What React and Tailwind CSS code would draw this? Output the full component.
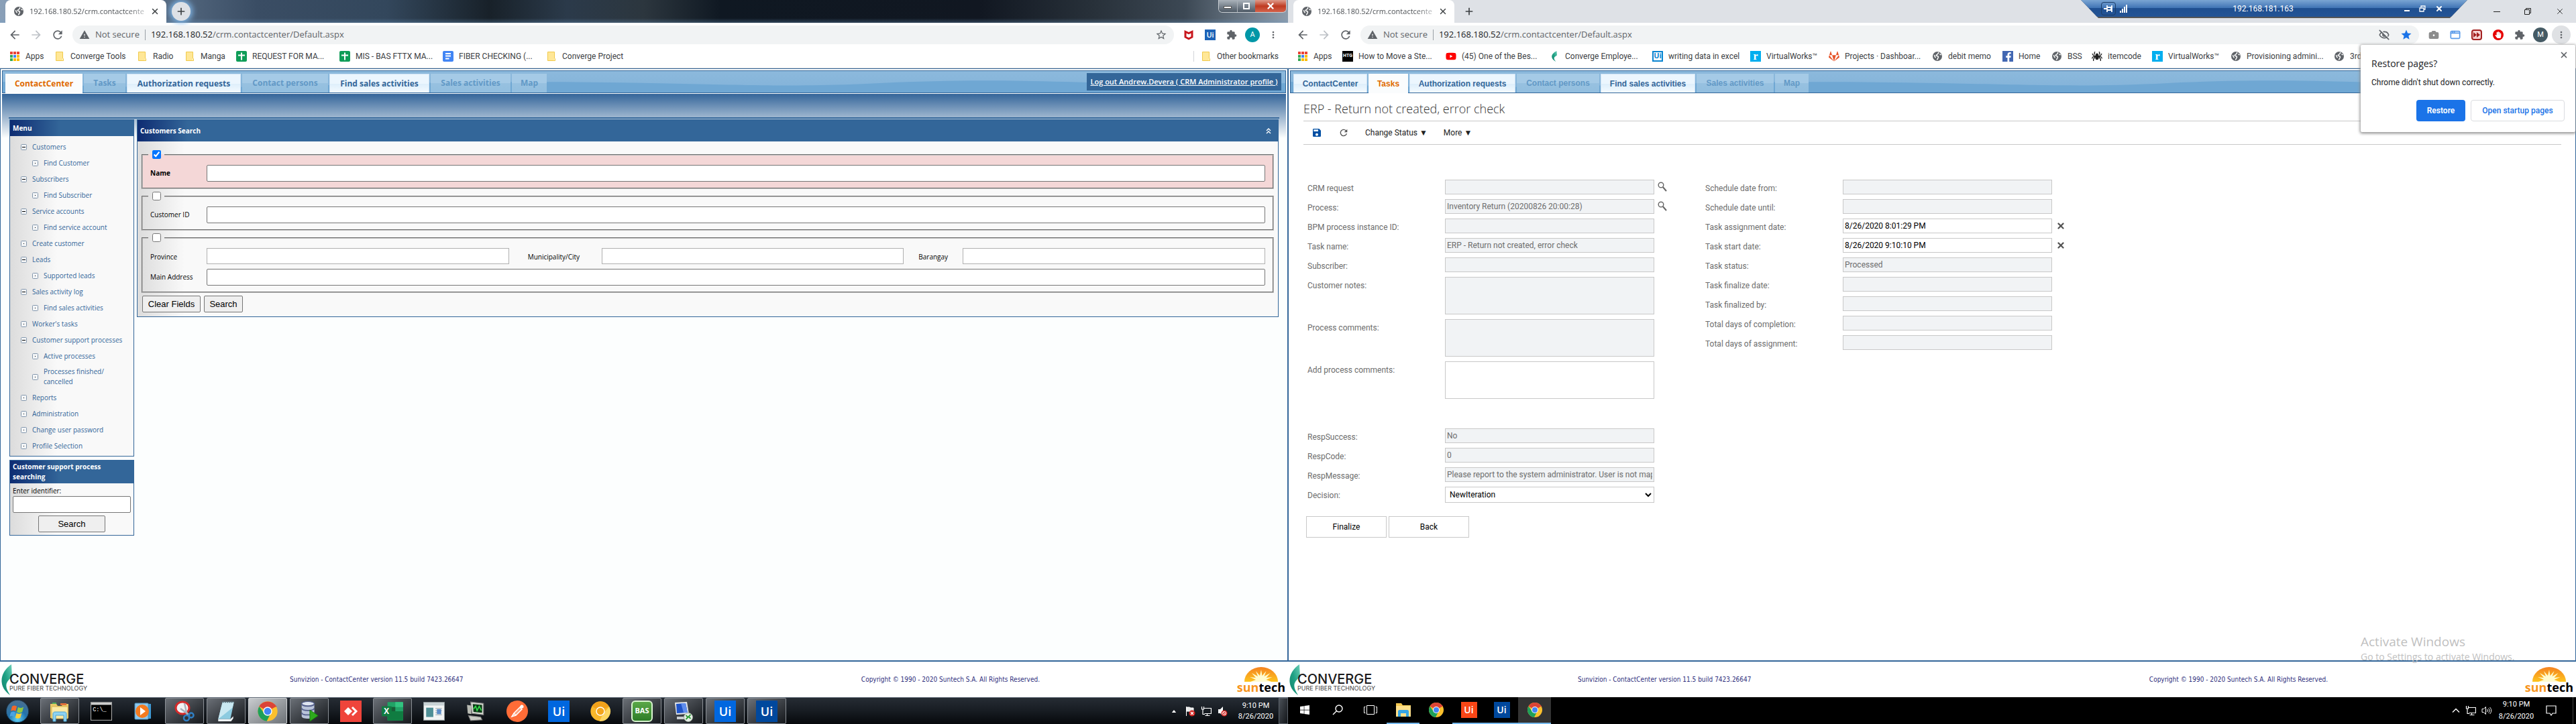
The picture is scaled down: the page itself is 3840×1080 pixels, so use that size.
import React from "react";
import { EyeOff, X, Plus, Camera, AppWindow } from "lucide-react";
import { MdArrowBack, MdArrowForward, MdRefresh, MdWarning, MdExtension, MdMoreVert, MdStar, MdStarBorder, MdSave } from "react-icons/md";
import { FaYoutube, FaGitlab, FaFacebookF, FaHandPaper, FaWindows, FaSpider } from "react-icons/fa";

/* ---------- small drawings ---------- */

function Globe() {
  return (
    <svg viewBox="0 0 16 16" className="size-4 shrink-0" aria-hidden="true">
      <circle cx="8" cy="8" r="7" fill="#5f6368" />
      <path d="M9 2.2c1.6.8-.4 1.9-.9 2.7-.6.9-2.1.6-1.9 1.9.2 1 2.2.5 3 1.4.9 1-.1 2-.6 2.9-.4.7-.5 2-1.4 2.3M3 6.5c1 .2 1.3 1.3 1.4 2.2.1.7 1 .9 1 1.6M11.5 4.5c.6.6 1.6.8 2 1.6" stroke="#fff" strokeWidth="1.5" fill="none" />
    </svg>
  );
}

function AppsGrid() {
  const colors = ["#ea4335", "#ea4335", "#ea4335", "#34a853", "#4285f4", "#fbbc04", "#34a853", "#fbbc04", "#fbbc04"];
  return (
    <svg viewBox="0 0 16 16" className="size-4" aria-hidden="true">
      {colors.map((c, i) => (
        <rect key={i} x={1 + (i % 3) * 5} y={1 + Math.floor(i / 3) * 5} width="4" height="4" fill={c} />
      ))}
    </svg>
  );
}

function Folder() {
  return (
    <svg viewBox="0 0 16 16" className="size-4" aria-hidden="true">
      <path d="M2.5 1.5h10v11.5l.5 1.5h-10.5z" fill="#ffe797" stroke="#f0c94a" />
      <path d="M12.5 10.5l1 1v3h-2" fill="#fff3c4" stroke="#f0c94a" />
    </svg>
  );
}

function Sheet() {
  return (
    <svg viewBox="0 0 16 16" className="size-4" aria-hidden="true">
      <rect width="16" height="16" rx="2" fill="#0f9d58" />
      <path d="M8 2.5v11M3 6.5h10" stroke="#fff" strokeWidth="2" />
    </svg>
  );
}

function Doc() {
  return (
    <svg viewBox="0 0 16 16" className="size-4" aria-hidden="true">
      <rect width="16" height="16" rx="2" fill="#4285f4" />
      <path d="M4 4h8M4 7.5h8M4 11.5h5.5" stroke="#fff" strokeWidth="1.8" />
    </svg>
  );
}

function Htg() {
  return <span className="flex size-4 items-center justify-center bg-black text-[7px] font-bold text-white">HTG</span>;
}

function ConvergeMark({ className = "size-4" }) {
  return (
    <svg viewBox="0 0 16 44" className={className} aria-hidden="true" preserveAspectRatio="none">
      <path d="M15 0C-3 12-5 32 13 44 5 32 5 26 16 18z" fill="url(#leaf)" />
      <defs>
        <linearGradient id="leaf" x1="0" y1="1" x2="1" y2="0">
          <stop offset="0" stopColor="#12806a" />
          <stop offset=".5" stopColor="#1fa184" />
          <stop offset="1" stopColor="#6fd0ba" />
        </linearGradient>
      </defs>
    </svg>
  );
}

function UiBox({ className }) {
  return <span className={"flex items-center justify-center font-['Open_Sans'] font-semibold text-white " + className}>Ui</span>;
}

function UiOutline() {
  return <span className="flex size-4 items-center justify-center border-2 border-[#0a85d1] bg-white font-['Open_Sans'] text-[11px] font-bold text-[#0a85d1]">Ui</span>;
}

function RBox() {
  return <span className="flex size-4 items-center justify-center bg-[#00aeef] font-['Liberation_Serif'] text-base leading-none font-bold text-white">r</span>;
}

function Puzzle() {
  return <MdExtension className="size-4 text-[#5f6368]" />;
}

function McAfee() {
  return (
    <svg viewBox="0 0 16 16" className="size-4" aria-hidden="true">
      <path d="M1.5 1l6.5 3 6.5-3v11L8 15.5 1.5 12z" fill="#c8171d" />
      <path d="M4.5 5.5L8 7.2l3.5-1.7v5L8 12.3l-3.5-1.8z" fill="#fff" />
    </svg>
  );
}

function ChromeLogo({ className = "size-6" }) {
  return (
    <svg viewBox="0 0 48 48" className={className} aria-hidden="true">
      <circle cx="24" cy="24" r="22" fill="#fbc02d" />
      <path d="M24 24L5 13A22 22 0 0 1 43 13z" fill="#db4437" />
      <path d="M5 13A22 22 0 0 0 22 46l9-18L15 27z" fill="#1da05a" />
      <path d="M24 14h20.5a22 22 0 0 0-1.5-2.5L24 10z" fill="#db4437" />
      <circle cx="24" cy="24" r="10" fill="#fff" />
      <circle cx="24" cy="24" r="8" fill="#4285f4" />
    </svg>
  );
}

function CanaryLogo() {
  return (
    <svg viewBox="0 0 48 48" className="size-8" aria-hidden="true">
      <circle cx="24" cy="24" r="22" fill="#f9b72a" />
      <path d="M24 24L5 13A22 22 0 0 1 43 13z" fill="#f1a11b" />
      <path d="M22 46l9-18 13-14a22 22 0 0 1-22 32z" fill="#fdd663" />
      <circle cx="24" cy="24" r="10" fill="#fff" />
      <circle cx="24" cy="24" r="8" fill="#f3a51c" />
    </svg>
  );
}

function ExplorerOld() {
  return (
    <svg viewBox="0 0 32 32" className="size-8" aria-hidden="true">
      <path d="M2 5h9l2 3h6l2-3h8v21H2z" fill="#e9c867" />
      <path d="M4 9h24v18H4z" fill="#fbe9a4" stroke="#d9b54e" />
      <path d="M5 3h6v2H5z" fill="#4fae5a" /><path d="M17 4h9v3h-9z" fill="#e2703a" />
      <path d="M6 31V20c0-2 1-3 3-3h14c2 0 3 1 3 3v11h-4v-9H10v9z" fill="#8ed3f2" stroke="#4aa3cf" />
    </svg>
  );
}

function ExplorerNew() {
  return (
    <svg viewBox="0 0 24 24" className="size-6" aria-hidden="true">
      <path d="M1 2h8l2 3h12v17H1z" fill="#f3c74f" />
      <path d="M1 6h22v16H1z" fill="#ffe08a" />
      <path d="M4 22v-8c0-1 1-2 2-2h12c1 0 2 1 2 2v8h-4v-5H8v5z" fill="#35a5e5" />
    </svg>
  );
}

function CmdIcon() {
  return (
    <svg viewBox="0 0 30 26" className="h-7 w-8" aria-hidden="true">
      <rect x=".5" y=".5" width="29" height="25" fill="#000" stroke="#aaa" />
      <rect x="1" y="1" width="28" height="3" fill="#d6d6d6" />
      <text x="3" y="13" fontSize="8" fill="#fff" fontFamily="Liberation Mono">C:\_</text>
    </svg>
  );
}

function MediaIcon() {
  return (
    <svg viewBox="0 0 28 28" className="size-7" aria-hidden="true">
      <path d="M6 2l20 1v22L6 26z" fill="#3f9bd6" />
      <rect x="2" y="2" width="20" height="24" rx="1" fill="#8cc8ee" stroke="#4a90bd" />
      <circle cx="13" cy="14" r="10" fill="#f47b20" />
      <path d="M10 8l8 6-8 6z" fill="#fff" />
    </svg>
  );
}

function SnipIcon() {
  return (
    <svg viewBox="0 0 32 32" className="size-8" aria-hidden="true">
      <ellipse cx="13" cy="11" rx="10" ry="9" fill="#f3f3f5" stroke="#d62b2b" strokeWidth="3" />
      <path d="M16 4L20 22M10 12L24 22" stroke="#a9b2bc" strokeWidth="2.5" />
      <circle cx="19" cy="26" r="4" fill="none" stroke="#2f7fc4" strokeWidth="2.5" />
      <circle cx="26" cy="22" r="3.5" fill="none" stroke="#2f7fc4" strokeWidth="2.5" />
    </svg>
  );
}

function NotepadIcon() {
  return (
    <svg viewBox="0 0 28 30" className="size-8" aria-hidden="true">
      <path d="M9 2h16l-5 24H3z" fill="#8ccbe0" />
      <path d="M9 2h16l-2 8L3 26z" fill="#c9e8f1" />
      <path d="M3 26h17l4-4v3l-3 4H3z" fill="#eef3f5" />
      <path d="M9 2h16" stroke="#5a6e78" strokeWidth="2" strokeDasharray="2 1" />
    </svg>
  );
}

function DbIcon() {
  return (
    <svg viewBox="0 0 32 34" className="size-8" aria-hidden="true">
      <path d="M4 5v20c0 5 20 5 20 0V5z" fill="#b9c3d9" />
      {[5, 12, 19].map((y) => <path key={y} d={`M4 ${y}c0 5 20 5 20 0`} fill="none" stroke="#545f8c" strokeWidth="2" />)}
      <ellipse cx="14" cy="5" rx="10" ry="3.5" fill="#dfe5f1" stroke="#545f8c" strokeWidth="1.5" />
      <path d="M17 15l13 9-13 9z" fill="#2faa1d" stroke="#187a0e" />
    </svg>
  );
}

function AnyDeskIcon() {
  return (
    <svg viewBox="0 0 32 32" className="size-8" aria-hidden="true">
      <rect width="32" height="32" fill="#ef443b" />
      <path d="M12 10l6 6-6 6-6-6z" fill="#fff" />
      <path d="M18 10l6 6-6 6" fill="none" stroke="#fff" strokeWidth="3" />
    </svg>
  );
}

function ExcelIcon() {
  return (
    <svg viewBox="0 0 32 28" className="h-8 w-[34px]" aria-hidden="true">
      <rect x="9" y="1" width="22" height="26" rx="1" fill="#21a366" />
      <path d="M9 14h22v12a1 1 0 0 1-1 1H9z" fill="#107c41" />
      <path d="M20 1h10a1 1 0 0 1 1 1v6H20z" fill="#33c481" />
      <path d="M9 8h11v6H9z" fill="#185c37" />
      <rect x="1" y="7" width="14" height="14" rx="1" fill="#107c41" />
      <text x="4" y="18" fontSize="11" fontWeight="700" fill="#fff" fontFamily="Open Sans">X</text>
    </svg>
  );
}

function WindowIcon() {
  return (
    <svg viewBox="0 0 30 26" className="h-7 w-8" aria-hidden="true">
      <rect x=".5" y=".5" width="29" height="25" fill="#f2f4f4" stroke="#8c9598" />
      <rect x="1" y="1" width="28" height="4" fill="#c8d2d5" />
      <rect x="4" y="8" width="10" height="13" fill="#4f8f96" />
      <path d="M17 9h9M17 12h9M17 15h7M17 18h9" stroke="#9aa5a8" />
      <rect x="19" y="10" width="6" height="7" fill="#5d8ec9" />
    </svg>
  );
}

function PuttyIcon() {
  return (
    <svg viewBox="0 0 30 30" className="size-8" aria-hidden="true">
      <path d="M8 2l18 2v16L10 18z" fill="#d7d9d2" stroke="#777" />
      <path d="M11 5l13 1v11l-12-1z" fill="#0d3b17" />
      <path d="M12 12l3-4 2 6 3-6 3 6" stroke="#35e04b" fill="none" strokeWidth="1.5" />
      <path d="M3 6l6 1v12l-5-1z" fill="#b9bbb3" />
      <path d="M5 21l17 2 2 4-16 1z" fill="#c9cbc4" stroke="#777" />
    </svg>
  );
}

function PostmanIcon() {
  return (
    <svg viewBox="0 0 32 32" className="size-8" aria-hidden="true">
      <circle cx="16" cy="16" r="16" fill="#ff6c37" />
      <path d="M8 24l3-5 9-9 3 3-9 9zM20 10l3-3M11 19l3 3" stroke="#fff" strokeWidth="1.5" fill="#f9a17f" />
      <circle cx="23" cy="9" r="2.5" fill="#fff" />
    </svg>
  );
}

function BasIcon() {
  return <span className="flex size-8 items-center justify-center rounded-md border-2 border-[#d9f5d0] bg-linear-to-b from-[#5aa848] to-[#2d7d27] font-['Open_Sans'] text-[11px] font-bold text-white">BAS</span>;
}

function RemoteIcon() {
  return (
    <svg viewBox="0 0 32 32" className="size-8" aria-hidden="true">
      <path d="M3 3l18-1 3 18-19 1z" fill="#e4e7ea" />
      <path d="M5 5l14-1 3 14-16 1z" fill="#1f54c8" />
      <path d="M12 4l7 0 3 14-6 0z" fill="#5f8dee" />
      <path d="M6 24h12v4H6z" fill="#c9ced2" />
      <circle cx="23" cy="25" r="6.5" fill="#e8efe8" stroke="#9aa79a" />
      <path d="M19.5 22l3 3-3 3M26.5 21l-3 3 3 3" stroke="#2a9b34" strokeWidth="1.8" fill="none" />
    </svg>
  );
}

function StartOrb() {
  return (
    <svg viewBox="0 0 40 40" className="h-[38px] w-9" aria-hidden="true">
      <defs>
        <radialGradient id="orb" cx=".5" cy=".85" r=".8">
          <stop offset="0" stopColor="#5fd0f5" />
          <stop offset=".5" stopColor="#2273ad" />
          <stop offset="1" stopColor="#4a6f8f" />
        </radialGradient>
      </defs>
      <circle cx="20" cy="20" r="18.5" fill="url(#orb)" stroke="#16344d" />
      <path d="M11 12c3-2 5-2 8 0l-2 8c-3-2-5-2-8 0z" fill="#f0682a" />
      <path d="M21 13c3 2 5 2 9 0l-2 8c-4 2-6 2-9 0z" fill="#93c83e" />
      <path d="M9 22c3-2 5-2 7.5 0l-2 7c-3-1.5-5-1.5-7.5 0z" fill="#4ba3e3" />
      <path d="M18.5 23c3 2 5 2 8.5 0l-2 7.5c-3 2-5.5 2-8.5 0z" fill="#fbce35" />
    </svg>
  );
}

function Magnifier() {
  return (
    <svg viewBox="0 0 14 15" className="h-[15px] w-3.5" aria-hidden="true">
      <circle cx="5" cy="5" r="3.8" fill="none" stroke="#666" strokeWidth="1.4" />
      <path d="M7.8 8l5.2 6" stroke="#666" strokeWidth="2" />
    </svg>
  );
}

function NetIcon() {
  return (
    <svg viewBox="0 0 16 16" className="size-4" fill="none" stroke="#fff" aria-hidden="true">
      <path d="M4.5 3.5h11v8h-10M9.5 12v2.5M6.5 14.5h7M1.5 1v4h3V1M3 5v7.5h3" strokeWidth="1.2" />
    </svg>
  );
}

function SuntechLogo() {
  return (
    <div className="flex flex-col items-center">
      <svg viewBox="0 0 50 22" className="h-[22px] w-[50px]" aria-hidden="true">
        <defs>
          <linearGradient id="sun" x1="0" y1="0" x2="0" y2="1">
            <stop offset="0" stopColor="#f58220" />
            <stop offset="1" stopColor="#fdc41f" />
          </linearGradient>
        </defs>
        <path d="M0 22a25 22 0 0 1 50 0z" fill="url(#sun)" />
        <path d="M25 4l1.5 9 6-7-3 8 9-5-6 7 9-1-9 4 8 3H9l8-3-9-4 9 1-6-7 9 5-3-8 6 7z" fill="#fffbd0" />
      </svg>
      <span className="font-['Open_Sans'] text-lg leading-4 font-bold text-black"><span className="text-[#f7941d]">sun</span>tech</span>
    </div>
  );
}

function ConvergeLogo() {
  return (
    <div className="flex items-center">
      <ConvergeMark className="h-[46px] w-4 shrink-0" />
      <div className="-ml-1 flex flex-col pt-2.5 font-['Inter'] text-[#1b1b1b]">
        <span className="text-xl leading-4 font-medium">CONVERGE</span>
        <span className="text-[9px] leading-3 text-[#444]">PURE FIBER TECHNOLOGY</span>
      </div>
    </div>
  );
}

/* ---------- browser frame ---------- */

function BrowserTab({ plain }) {
  return (
    <>
      <div className="ml-2 flex h-[34px] w-60 items-center gap-2 rounded-t-lg bg-white pr-2.5 pl-3">
        <Globe />
        <span className="flex-1 bg-linear-to-r from-[#45494d] from-85% to-[#c4c6c8] bg-clip-text font-['Open_Sans'] text-[11px] whitespace-nowrap text-transparent">192.168.180.52/crm.contactcente</span>
        <button aria-label="Close tab" className="shrink-0"><X className="size-3.5 text-[#3c4043]" strokeWidth={2.5} /></button>
      </div>
      <button aria-label="New tab" className={plain ? "ml-2 flex size-7 items-center justify-center" : "ml-2 flex size-7 items-center justify-center rounded-full bg-[#dee1e6] shadow-[0_0_8px_3px_#7fb5e6]"}>
        <Plus className="size-4 text-[#3c4043]" strokeWidth={2.5} />
      </button>
    </>
  );
}

function Bookmarks({ items, children }) {
  return (
    <nav aria-label="Bookmarks" className="flex h-9 items-center overflow-hidden border-b border-[#d3d5d9] pr-3.5 pl-3.5 text-xs text-[#3c4043]">
      {items.map(([label, icon, width], i) => (
        <a key={i} href="#" className={"flex shrink-0 items-center gap-2 overflow-hidden whitespace-nowrap " + width}>
          <span className="flex size-4 shrink-0 items-center justify-center">{icon}</span>
          {label}
        </a>
      ))}
      {children}
    </nav>
  );
}

function AddressBar({ inside, children }) {
  return (
    <div className="flex h-8 items-center pt-1">
      <div className="flex w-[108px] items-center gap-3 pl-3 text-[#5f6368]">
        <button aria-label="Back"><MdArrowBack className="size-5" /></button>
        <button aria-label="Forward"><MdArrowForward className="size-5 text-[#bdc1c6]" /></button>
        <button aria-label="Reload"><MdRefresh className="size-5" /></button>
      </div>
      <div className="flex h-7 flex-1 items-center rounded-full bg-[#f1f3f4] px-2.5 font-['Open_Sans'] text-[13px] text-[#5f6368]">
        <MdWarning className="mr-2 size-4" />
        <span>Not secure</span>
        <span className="mx-2 h-4 w-px bg-[#9aa0a6]" />
        <span className="flex-1"><span className="text-[#202124]">192.168.180.52</span>/crm.contactcenter/Default.aspx</span>
        <div className="flex items-center gap-4">{inside}</div>
      </div>
      {children}
    </div>
  );
}

/* ---------- application tabs ---------- */

function AppTabs({ tabs, font, children }) {
  const looks = {
    on: "bg-[#fafcfd] text-[#e06a00] -mb-px",
    open: "border-x border-t border-[#cfe3f5] bg-[linear-gradient(#ecf6fe_50%,#ddeefb_50%,#f3faff)] text-[#336699]",
    off: "bg-[linear-gradient(#a5cae6_50%,#97c1e0_50%,#92bedf)] text-[#6299c6]",
  };
  return (
    <div className="relative mx-0.5 mt-0.5 flex h-[34px] items-start border border-[#336699] bg-linear-to-b from-[#8cb9dc] to-[#82b2d9]">
      <svg viewBox="0 0 1900 32" preserveAspectRatio="none" className="absolute inset-0 size-full" aria-hidden="true">
        <path d="M0 16C150 26 300 26 480 21S800 15 960 18s220 6 340 0 220-4 340 0 180 4 260 0v14H0z" fill="#6fa7d3" />
      </svg>
      <ul className={"relative flex h-8 flex-1 gap-0.5 pt-1 pl-1 text-xs font-bold " + font}>
        {tabs.map(([label, look, width]) => (
          <li key={label} className={"flex " + width}>
            <button className={"flex flex-1 items-center justify-center whitespace-nowrap " + looks[look]}>{label}</button>
          </li>
        ))}
      </ul>
      {children}
    </div>
  );
}

function PageFooter() {
  return (
    <footer className="flex h-[53px] items-center bg-white pr-1 pl-0.5 font-['DejaVu_Sans_Condensed','DejaVu_Sans',sans-serif] text-[10px] text-[#2f2f7d]">
      <div className="w-[430px]"><ConvergeLogo /></div>
      <span className="flex-1">Sunvizion - ContactCenter version 11.5 build 7423.26647</span>
      <span className="w-[560px]">Copyright © 1990 - 2020 Suntech S.A. All Rights Reserved.</span>
      <SuntechLogo />
    </footer>
  );
}

/* ---------- left screen ---------- */

const menu = [
  ["Customers", "minus"], ["Find Customer", "child"], ["Subscribers", "minus"], ["Find Subscriber", "child"],
  ["Service accounts", "minus"], ["Find service account", "child"], ["Create customer", "dot"], ["Leads", "minus"],
  ["Supported leads", "child"], ["Sales activity log", "minus"], ["Find sales activities", "child"], ["Worker's tasks", "dot"],
  ["Customer support processes", "minus"], ["Active processes", "child"], ["Processes finished/ cancelled", "tall"],
  ["Reports", "dot"], ["Administration", "dot"], ["Change user password", "dot"], ["Profile Selection", "dot"],
];

function NodeIcon({ kind }) {
  return (
    <svg viewBox="0 0 9 9" className="size-[9px] shrink-0" aria-hidden="true">
      <rect x=".5" y=".5" width="8" height="8" rx="1" fill="#f4f6f8" stroke="#8397ac" />
      {kind === "minus" ? <path d="M2 4.5h5" stroke="#000" /> : <rect x="4" y="4" width="1" height="1" fill="#000" />}
    </svg>
  );
}

function Sidebar() {
  return (
    <aside className="flex w-[186px] shrink-0 flex-col gap-[5px] font-['Open_Sans'] text-[10px]">
      <section className="border border-[#336699] bg-[linear-gradient(90deg,#dcdcdc,#f9f9f9_70px)]">
        <h2 className="flex h-6 items-center bg-[linear-gradient(90deg,#0e2c72,#336699_75px)] pl-1 font-bold text-white">Menu</h2>
        <ul className="pt-1 pb-[3px] text-[#336699]">
          {menu.map(([label, kind]) => {
            const nested = kind === "child" || kind === "tall";
            return (
              <li key={label} className={"flex items-center gap-2 leading-[15px] " + (nested ? "pl-[33px] " : "pl-4 ") + (kind === "tall" ? "h-[38px]" : "h-6")}>
                <NodeIcon kind={kind} />
                <a href="#" className={kind === "tall" ? "w-24" : "whitespace-nowrap"}>{label}</a>
              </li>
            );
          })}
        </ul>
      </section>
      <section className="border border-[#336699] bg-[linear-gradient(90deg,#dcdcdc,#f9f9f9_70px)]">
        <h2 className="bg-[linear-gradient(90deg,#0e2c72,#336699_75px)] py-0.5 pr-8 pl-1 leading-[15px] font-bold text-white">Customer support process searching</h2>
        <form className="flex flex-col px-1 pt-1 pb-1">
          <label htmlFor="identifier" className="leading-[15px]">Enter identifier:</label>
          <input id="identifier" type="text" className="h-[25px] rounded-xs border border-[#767676] bg-white px-1" />
          <button type="button" className="mt-1 h-[25px] w-[100px] self-center rounded-xs border border-[#767676] bg-[#efefef] font-['Liberation_Sans'] text-[13px]">Search</button>
        </form>
      </section>
    </aside>
  );
}

function Group({ name, checked, required, children }) {
  return (
    <fieldset className={"border-2 border-[#c0c0c0] px-[11px] pt-[9px] pb-[9px] [border-style:groove] " + (required ? "bg-[#f4d7d7]" : "")}>
      <legend className="-ml-[3px] flex h-[13px] w-6 items-center justify-center">
        <input type="checkbox" aria-label={"Search by " + name} defaultChecked={checked} className="size-[13px]" />
      </legend>
      {children}
    </fieldset>
  );
}

const textBox = "h-[25px] w-full rounded-xs border border-[#767676] bg-white px-1";
const comboBox = "h-6 w-full border border-[#b0b0b0] bg-white px-1";

function CustomersSearch() {
  return (
    <section className="flex-1 self-start border border-[#336699] bg-[linear-gradient(90deg,#dcdcdc,#f9f9f9_70px)] font-['Open_Sans'] text-[10px]">
      <div className="flex h-8 items-center justify-between bg-[linear-gradient(90deg,#0e2c72,#336699_75px)] pr-2.5 pl-1 text-white">
        <h2 className="font-bold">Customers Search</h2>
        <button aria-label="Collapse">
          <svg viewBox="0 0 8 9" className="h-[9px] w-2" fill="none" stroke="#fff" strokeWidth="1.4" aria-hidden="true">
            <path d="M1 4l3-3 3 3M1 8l3-3 3 3" />
          </svg>
        </button>
      </div>
      <form className="flex flex-col gap-1 px-1.5 pt-[13px] pb-1.5">
        <Group name="name" checked required>
          <div className="flex items-center">
            <label htmlFor="name" className="w-[84px] shrink-0 font-bold">Name</label>
            <input id="name" type="text" className={textBox} />
          </div>
        </Group>
        <Group name="customer ID">
          <div className="flex items-center">
            <label htmlFor="cid" className="w-[84px] shrink-0">Customer ID</label>
            <input id="cid" type="text" className={textBox} />
          </div>
        </Group>
        <Group name="address">
          <div className="mb-[7px] grid grid-cols-[84px_1fr_138px_1fr_88px_1fr] items-center">
            <label htmlFor="province" className="pt-0.5">Province</label>
            <input id="province" type="text" className={comboBox} />
            <label htmlFor="city" className="pt-0.5 pl-7">Municipality/City</label>
            <input id="city" type="text" className={comboBox} />
            <label htmlFor="barangay" className="pt-0.5 pl-[22px]">Barangay</label>
            <input id="barangay" type="text" className={comboBox} />
          </div>
          <div className="flex items-center">
            <label htmlFor="address" className="w-[84px] shrink-0">Main Address</label>
            <input id="address" type="text" className={textBox} />
          </div>
        </Group>
        <div className="flex gap-[5px] pl-px font-['Liberation_Sans'] text-[13px]">
          <button type="button" className="h-[25px] w-[87px] rounded-xs border border-[#767676] bg-[#efefef]">Clear Fields</button>
          <button type="button" className="h-[25px] w-[58px] rounded-xs border border-[#767676] bg-[#efefef]">Search</button>
        </div>
      </form>
    </section>
  );
}

const leftBookmarks = [
  ["Apps", <AppsGrid />, "w-[67px]"], ["Converge Tools", <Folder />, "w-[123px]"], ["Radio", <Folder />, "w-[71px]"],
  ["Manga", <Folder />, "w-[77px]"], ["REQUEST FOR MA...", <Sheet />, "w-[154px]"], ["MIS - BAS FTTX MA...", <Sheet />, "w-[154px]"],
  ["FIBER CHECKING (...", <Doc />, "w-[154px]"], ["Converge Project", <Folder />, "w-[140px]"],
];

const win7Apps = [
  [<ExplorerOld />, "open"], [<CmdIcon />, ""], [<MediaIcon />, ""], [<SnipIcon />, "open"], [<NotepadIcon />, "open"],
  [<ChromeLogo className="size-8" />, "active"], [<DbIcon />, "open"], [<AnyDeskIcon />, ""], [<ExcelIcon />, "open"],
  [<WindowIcon />, ""], [<PuttyIcon />, ""], [<PostmanIcon />, ""], [<UiBox className="size-8 bg-[#0067df] text-lg" />, ""],
  [<CanaryLogo />, ""], [<BasIcon />, "open"], [<RemoteIcon />, "open"],
  [<UiBox className="size-8 bg-[#0067df] text-lg" />, "open"], [<UiBox className="size-8 bg-[#00489d] text-lg" />, "open"],
];

function Win7Taskbar() {
  const looks = {
    "": "",
    open: "rounded-xs border border-[#8b9096] bg-linear-to-br from-[#6b7077] to-[#16191d]",
    active: "rounded-xs border border-[#d0d3d6] bg-linear-to-br from-[#c9cccf] to-[#6d7277]",
  };
  return (
    <div className="flex h-10 items-stretch border-t border-[#5f6975] bg-linear-to-b from-[#262c34] via-[#171c22] to-[#07090c] text-white">
      <button aria-label="Start" className="flex w-[60px] items-center pl-2"><StartOrb /></button>
      <div className="flex flex-1 gap-1">
        {win7Apps.map(([icon, look], i) => (
          <button key={i} aria-label={"App " + (i + 1)} className={"flex w-[58px] items-center justify-center " + looks[look]}>{icon}</button>
        ))}
      </div>
      <div className="flex items-center gap-2 pr-1.5">
        <svg viewBox="0 0 8 5" className="h-1 w-2" aria-hidden="true"><path d="M0 5l4-5 4 5z" fill="#fff" /></svg>
        <svg viewBox="0 0 16 16" className="ml-1 size-4" aria-hidden="true">
          <path d="M2.5 1v14M3 2h4l2 1h4v6H8L7 8H3z" stroke="#fff" fill="#e8e8e8" />
          <circle cx="11" cy="11" r="4.5" fill="#d2231f" /><path d="M9 9l4 4M13 9l-4 4" stroke="#fff" strokeWidth="1.3" />
        </svg>
        <NetIcon />
        <svg viewBox="0 0 16 16" className="size-4" aria-hidden="true">
          <path d="M2 5h3l4-4v14l-4-4H2z" fill="#fff" />
          <circle cx="11" cy="11" r="4.5" fill="#d2231f" /><circle cx="11" cy="11" r="2.5" fill="none" stroke="#fff" /><path d="M9 9l4 4" stroke="#fff" />
        </svg>
        <div className="ml-1.5 w-14 text-center text-[11px] leading-4"><div>9:10 PM</div><div>8/26/2020</div></div>
      </div>
      <button aria-label="Show desktop" className="w-3.5 border border-[#5d646c] bg-linear-to-br from-[#4b5158] to-[#14171b]" />
    </div>
  );
}

function LeftScreen() {
  return (
    <div className="flex min-h-screen min-w-0 flex-col bg-white">
      <div className="flex h-[34px] items-center bg-[linear-gradient(transparent_80%,#6f9cc655),linear-gradient(90deg,#8aa0b8,#3a4d64_20%,#33475c_30%,#182129_38%,#2b3a4a_44%,#2c363e_50%,#0f1822_56%,#111721_76%,#28313a_85%,#3c4854_92%,#8d9cab)]">
        <BrowserTab />
        <div className="flex-1" />
        <div className="mr-0.5 flex h-[19px] w-[102px] self-start overflow-hidden rounded-b-md border border-t-0 border-[#c9ced3]">
          <button aria-label="Minimize" className="flex flex-1 items-center justify-center border-r border-[#a9b0b7] bg-linear-to-b from-[#aab2ba] to-[#4e5a66]"><span className="mt-1 h-1 w-3 border border-[#555] bg-white" /></button>
          <button aria-label="Restore" className="flex flex-1 items-center justify-center bg-linear-to-b from-[#aab2ba] to-[#4e5a66]"><span className="size-2.5 border-2 border-white" /></button>
          <button aria-label="Close" className="flex w-[46px] items-center justify-center bg-linear-to-b from-[#dd9a8a] via-[#bf3a20] to-[#d4624a]"><X className="size-3.5 text-white" strokeWidth={4} /></button>
        </div>
      </div>
      <AddressBar inside={<MdStarBorder className="size-[18px]" />}>
        <div className="flex items-center gap-4 pr-3.5 pl-3.5">
          <McAfee />
          <UiBox className="size-4 bg-[#1c63b7] text-[11px]" />
          <Puzzle />
          <span className="-mr-1 -ml-1 flex size-[22px] items-center justify-center rounded-full bg-[#0097a7] text-[11px] text-white">A</span>
          <MdMoreVert className="size-4 text-[#5f6368]" />
        </div>
      </AddressBar>
      <Bookmarks items={leftBookmarks}>
        <a href="#" className="ml-auto flex items-center gap-2 border-l border-[#d3d5d9] pl-2.5"><Folder />Other bookmarks</a>
      </Bookmarks>
      <main className="flex flex-1 flex-col border border-b-2 border-[#336699] bg-[#fcfefe]">
        <AppTabs
          font="font-['Open_Sans']"
          tabs={[["ContactCenter", "on", "w-[115px]"], ["Tasks", "off", "w-[62px]"], ["Authorization requests", "open", "w-[170px]"], ["Contact persons", "off", "w-[128px]"], ["Find sales activities", "open", "w-[149px]"], ["Sales activities", "off", "w-[119px]"], ["Map", "off", "w-[52px]"]]}
        >
          <a href="#" className="relative mt-[3px] mr-1.5 flex h-[26px] w-[290px] items-center justify-center bg-[#336699] font-['Open_Sans'] text-[11px] font-semibold whitespace-nowrap text-white underline">Log out Andrew.Devera ( CRM Administrator profile )</a>
        </AppTabs>
        <div className="mx-0.5 mt-px flex-1 bg-[linear-gradient(#34659a,#fcfefe_66px)] px-2.5 pt-[35px]">
          <div className="h-[3px] border-b border-[#b4cbe0] bg-[#336699]" />
          <div className="flex gap-1 px-px">
            <Sidebar />
            <CustomersSearch />
          </div>
        </div>
      </main>
      <PageFooter />
      <Win7Taskbar />
    </div>
  );
}

/* ---------- right screen ---------- */

const rightBookmarks = [
  ["Apps", <AppsGrid />, "w-[67px]"], ["How to Move a Ste...", <Htg />, "w-[154px]"], ["(45) One of the Bes...", <FaYoutube className="size-4 text-[#f00]" />, "w-[154px]"],
  ["Converge Employe...", <ConvergeMark className="h-4 w-2" />, "w-[154px]"], ["writing data in excel", <UiOutline />, "w-[146px]"],
  ["VirtualWorks™", <RBox />, "w-[117px]"], ["Projects · Dashboar...", <FaGitlab className="size-4 text-[#e65328]" />, "w-[154px]"], ["debit memo", <Globe />, "w-[105px]"],
  ["Home", <span className="flex size-4 items-end justify-end bg-[#4267b2]"><FaFacebookF className="size-3.5 text-white" /></span>, "w-[73px]"],
  ["BSS", <Globe />, "w-[60px]"], ["itemcode", <FaSpider className="size-4 text-[#222]" />, "w-[90px]"], ["VirtualWorks™", <RBox />, "w-[117px]"],
  ["Provisioning admini...", <Globe />, "w-[154px]"], ["3rd party", <Globe />, "w-[80px]"],
];

const fieldBox = "w-[312px] border border-[#c8c8c8] px-0.5";

function Field({ id, label, value, kind, editable, mark }) {
  const tone = editable ? "bg-white text-black" : "bg-[#f1f3f5] text-[#6d6d6d]";
  return (
    <div className="flex items-start">
      <label htmlFor={id} className="w-[205px] shrink-0 pt-[5px] leading-4">{label}</label>
      {kind === "area" ? (
        <textarea id={id} readOnly={!editable} className={fieldBox + " block h-14 resize-none " + tone} />
      ) : (
        <input id={id} type="text" readOnly={!editable} defaultValue={value} className={fieldBox + " h-[22px] " + tone} />
      )}
      {mark === "find" && <button aria-label={"Find " + label} className="mt-[3px] ml-[5px]"><Magnifier /></button>}
      {mark === "clear" && <button aria-label={"Clear " + label} className="mt-1 ml-1.5"><X className="size-3.5 text-[#555]" strokeWidth={4} /></button>}
    </div>
  );
}

function TaskForm() {
  return (
    <form className="flex pt-[52px] pl-1.5 text-xs text-[#6d6d6d]">
      <div className="flex w-[593px] flex-col gap-[7px]">
        <Field id="crm" label="CRM request" mark="find" />
        <Field id="process" label="Process:" value="Inventory Return (20200826 20:00:28)" mark="find" />
        <Field id="bpm" label="BPM process instance ID:" />
        <Field id="task" label="Task name:" value="ERP - Return not created, error check" />
        <Field id="sub" label="Subscriber:" />
        <Field id="notes" label="Customer notes:" kind="area" />
        <Field id="pcom" label="Process comments:" kind="area" />
        <Field id="acom" label="Add process comments:" kind="area" editable />
        <div className="h-[30px]" />
        <Field id="succ" label="RespSuccess:" value="No" />
        <Field id="code" label="RespCode:" value="0" />
        <Field id="msg" label="RespMessage:" value="Please report to the system administrator. User is not mapped" />
        <div className="flex items-start">
          <label htmlFor="decision" className="w-[205px] shrink-0 pt-[5px] leading-4">Decision:</label>
          <select id="decision" defaultValue="NewIteration" className="h-6 w-[312px] border border-[#c8c8c8] bg-white pl-0.5 text-black">
            <option>NewIteration</option>
          </select>
        </div>
        <div className="mt-[13px] flex gap-[3px] text-black">
          <button type="button" className="-ml-0.5 h-8 w-[120px] border border-[#c8c8c8] bg-white">Finalize</button>
          <button type="button" className="h-8 w-[120px] border border-[#c8c8c8] bg-white">Back</button>
        </div>
      </div>
      <div className="flex flex-col gap-[7px]">
        <Field id="from" label="Schedule date from:" />
        <Field id="until" label="Schedule date until:" />
        <Field id="assign" label="Task assignment date:" value="8/26/2020 8:01:29 PM" editable mark="clear" />
        <Field id="start" label="Task start date:" value="8/26/2020 9:10:10 PM" editable mark="clear" />
        <Field id="status" label="Task status:" value="Processed" />
        <Field id="fin" label="Task finalize date:" />
        <Field id="finby" label="Task finalized by:" />
        <Field id="comp" label="Total days of completion:" />
        <Field id="asg" label="Total days of assignment:" />
      </div>
    </form>
  );
}

function RestoreDialog() {
  return (
    <div role="dialog" aria-label="Restore pages" className="absolute top-[67px] right-px z-10 w-80 rounded-xs bg-white px-4 pt-[18px] pb-4 font-['Open_Sans'] shadow-[0_1px_4px_1px_#8c8c8c]">
      <button aria-label="Close" className="absolute top-2 right-2.5"><X className="size-3.5 text-[#5f6368]" strokeWidth={3} /></button>
      <h2 className="text-sm text-[#202124]">Restore pages?</h2>
      <p className="mt-2 font-[Roboto] text-xs leading-5 text-[#202124]">Chrome didn't shut down correctly.</p>
      <div className="mt-4 flex justify-end gap-2 font-[Roboto] text-xs">
        <button className="h-8 w-[73px] rounded-sm bg-[#1a73e8] font-semibold text-white">Restore</button>
        <button className="h-8 w-[140px] rounded-sm border border-[#dadce0] font-medium text-[#1a73e8]">Open startup pages</button>
      </div>
    </div>
  );
}

function RemoteBar() {
  return (
    <div className="absolute top-0 right-[162px] flex h-[27px] w-[576px] items-center bg-[#555] pb-0.5 text-xs text-white [clip-path:polygon(0_0,100%_0,calc(100%-26px)_100%,26px_100%)]">
      <div className="flex h-[25px] flex-1 items-center bg-[linear-gradient(#7aa5d3,#3f73b4_48%,#1f4f90_50%,#245496)] pr-9 pl-[30px]">
        <button aria-label="Pin" className="flex h-5 w-[22px] items-center justify-center rounded-sm border border-[#1d3d66]">
          <svg viewBox="0 0 14 10" className="h-2.5 w-3.5" aria-hidden="true"><path d="M0 5h5M5 0v10M5 3h6v4H5M12 0v10" stroke="#fff" strokeWidth="1.8" fill="none" /></svg>
        </button>
        <svg viewBox="0 0 11 12" className="ml-1.5 h-3 w-[11px]" aria-hidden="true"><path d="M1 12V9M4 12V6M7 12V3M10 12V0" stroke="#fff" strokeWidth="2" /></svg>
        <span className="flex-1 pr-2 text-center">192.168.181.163</span>
        <div className="flex items-center gap-3.5">
          <button aria-label="Minimize" className="mt-1.5 h-0.5 w-2 bg-white" />
          <button aria-label="Restore"><svg viewBox="0 0 10 10" className="size-2.5" fill="none" stroke="#fff" strokeWidth="1.3" aria-hidden="true"><path d="M3 3V1h6v5H7M1 4h6v5H1z" /></svg></button>
          <button aria-label="Close"><X className="size-3" strokeWidth={4} /></button>
        </div>
      </div>
    </div>
  );
}

function Win10Taskbar() {
  const cell = "flex w-[49px] items-center justify-center border-b-2 ";
  return (
    <div className="flex h-10 items-stretch bg-black text-white">
      <button aria-label="Start" className={cell + "border-transparent"}><FaWindows className="size-4" /></button>
      <button aria-label="Search" className={cell + "border-transparent"}>
        <svg viewBox="0 0 16 16" className="size-4" fill="none" stroke="#fff" strokeWidth="1.4" aria-hidden="true"><circle cx="10" cy="6" r="5" /><path d="M6.5 9.5L1 15" /></svg>
      </button>
      <button aria-label="Task view" className={cell + "border-transparent"}>
        <svg viewBox="0 0 20 14" className="h-3.5 w-5" fill="none" stroke="#fff" aria-hidden="true"><path d="M4.5.5h11v13h-11zM2.5 2.5h-2v9h2M17.5 2.5h2v9h-2" /></svg>
      </button>
      <button aria-label="Explorer" className={cell + "border-[#76b9ed]"}><ExplorerNew /></button>
      <button aria-label="Chrome" className={cell + "border-transparent"}><ChromeLogo /></button>
      <button aria-label="UiPath Robot" className={cell + "border-[#76b9ed]"}><UiBox className="size-6 bg-[#fa4616] text-sm" /></button>
      <button aria-label="UiPath Studio" className={cell + "border-[#76b9ed]"}><UiBox className="size-6 bg-[#00489d] text-sm" /></button>
      <button aria-label="Chrome window" className={cell + "border-[#76b9ed] bg-[#333]"}><ChromeLogo /></button>
      <div className="flex-1" />
      <div className="flex items-center gap-2">
        <svg viewBox="0 0 12 7" className="h-2 w-3" fill="none" stroke="#fff" strokeWidth="1.4" aria-hidden="true"><path d="M1 6l5-5 5 5" /></svg>
        <NetIcon />
        <svg viewBox="0 0 16 16" className="size-4" fill="none" stroke="#fff" aria-hidden="true"><path d="M1 5.5h2.5l3-3v11l-3-3H1zM8.5 6c1 1.2 1 2.8 0 4M10.5 4.5c2 2 2 5 0 7M12.5 3c3 3 3 7 0 10" /></svg>
        <div className="w-14 text-center text-[11px] leading-[18px]"><div>9:10 PM</div><div>8/26/2020</div></div>
        <svg viewBox="0 0 16 16" className="mr-4 ml-2 size-4" fill="none" stroke="#fff" strokeWidth="1.2" aria-hidden="true"><path d="M1 1h14v11h-5l-2 3-2-3H1z" /></svg>
        <span className="h-10 w-[5px] border-l border-[#444]" />
      </div>
    </div>
  );
}

function RightScreen() {
  return (
    <div className="relative flex min-h-screen min-w-0 flex-col bg-white">
      <div className="flex h-[34px] items-center bg-[#dee1e6]">
        <BrowserTab plain />
        <div className="flex-1" />
        <div className="flex items-center gap-9 pr-[17px] text-[#222]">
          <button aria-label="Minimize" className="h-px w-2.5 bg-[#222]" />
          <button aria-label="Restore"><svg viewBox="0 0 10 10" className="size-2.5" fill="none" stroke="#222" aria-hidden="true"><path d="M2.5 2.5v-2h7v7h-2M.5 2.5h7v7h-7z" /></svg></button>
          <button aria-label="Close"><X className="size-3.5" strokeWidth={1.5} /></button>
        </div>
      </div>
      <RemoteBar />
      <AddressBar inside={<><EyeOff className="size-4" strokeWidth={2.5} /><MdStar className="size-[18px] text-[#1a73e8]" /></>}>
        <div className="flex items-center gap-4 pr-2 pl-3.5">
          <Camera className="size-4 fill-[#8d8d8d] text-[#8d8d8d] [&_circle]:fill-white" />
          <AppWindow className="size-4 text-[#5b9bea]" strokeWidth={2.5} />
          <span className="flex size-4 items-center justify-center rounded-sm border-2 border-[#a32020] bg-[#f6d4d4]">
            <svg viewBox="0 0 10 8" className="h-2 w-2.5" aria-hidden="true"><path d="M0 0l5 4-5 4zM5 0l5 4-5 4z" fill="#a32020" /></svg>
          </span>
          <span className="flex size-4 items-center justify-center rounded-full bg-[#e60000]"><FaHandPaper className="size-2.5 text-white" /></span>
          <Puzzle />
          <span className="-mr-1 -ml-1 flex size-[22px] items-center justify-center rounded-full bg-[#455a64] text-[11px] text-white">M</span>
          <button aria-label="Menu" className="-ml-1.5 flex size-7 items-center justify-center rounded-full bg-[#dfe1e4]"><MdMoreVert className="size-4 text-[#5f6368]" /></button>
        </div>
      </AddressBar>
      <Bookmarks items={rightBookmarks} />
      <RestoreDialog />
      <main className="relative flex flex-1 flex-col border border-b-2 border-[#336699] bg-white">
        <AppTabs
          font="font-['Liberation_Sans']"
          tabs={[["ContactCenter", "open", "w-[110px]"], ["Tasks", "on", "w-[59px]"], ["Authorization requests", "open", "w-[158px]"], ["Contact persons", "off", "w-[123px]"], ["Find sales activities", "open", "w-[141px]"], ["Sales activities", "off", "w-[115px]"], ["Map", "off", "w-[50px]"]]}
        />
        <div className="pt-[7px] pr-[21px] pl-[22px]">
          <h1 className="h-[35px] border-b border-[#c8c8c8] font-['Open_Sans'] text-lg leading-8 font-light text-[#333]">ERP - Return not created, error check</h1>
          <div className="flex h-[35px] items-center border-b border-[#c8c8c8] pl-3 text-xs text-[#222]">
            <button aria-label="Save"><MdSave className="size-4 text-[#004fa3]" /></button>
            <button aria-label="Refresh" className="ml-6"><MdRefresh className="size-4 text-[#555]" /></button>
            <button className="ml-6">Change Status ▼</button>
            <button className="ml-6">More ▼</button>
          </div>
          <TaskForm />
        </div>
        <div className="pointer-events-none absolute right-[84px] -bottom-1.5 w-[236px] font-['Open_Sans'] whitespace-nowrap text-[#bfbfbf]">
          <div className="text-[19px] leading-6">Activate Windows</div>
          <div className="text-sm leading-[22px]">Go to Settings to activate Windows.</div>
        </div>
      </main>
      <PageFooter />
      <Win10Taskbar />
    </div>
  );
}

export default function App() {
  return (
    <div className="grid min-h-screen grid-cols-2 font-[Roboto]">
      <LeftScreen />
      <RightScreen />
    </div>
  );
}
